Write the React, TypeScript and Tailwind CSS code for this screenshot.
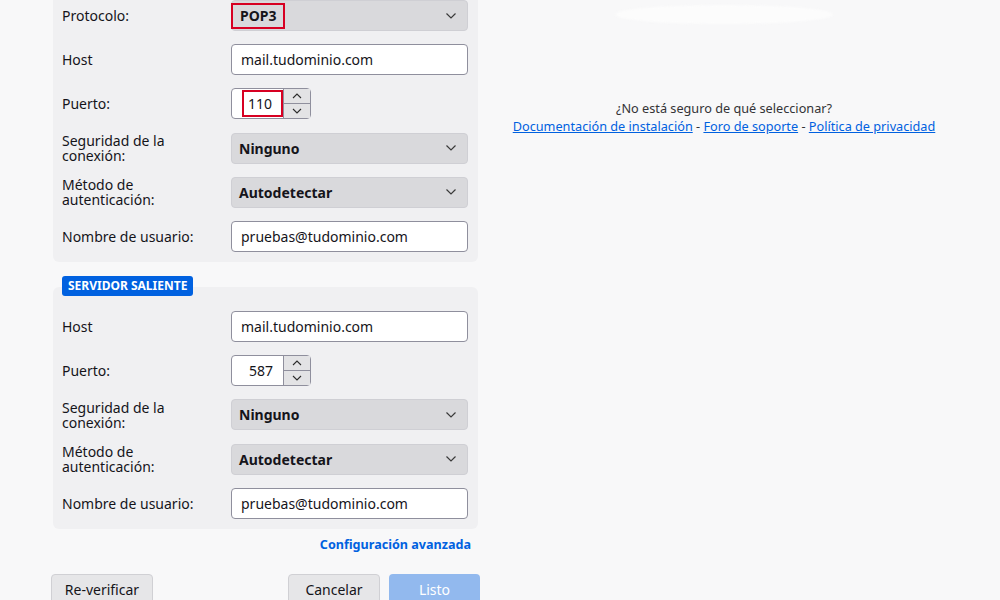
import React from "react";

const font = { fontFamily: '"Noto Sans", "Open Sans", sans-serif' };

function Chevron() {
  return (
    <svg width="12" height="8" viewBox="0 0 12 8" className="text-[#3a3a3a]">
      <path d="M1.5 1.5 L6 6 L10.5 1.5" fill="none" stroke="currentColor" strokeWidth="1.2" />
    </svg>
  );
}

function Row({ label, children }: { label: string; children: React.ReactNode }) {
  return (
    <div className="flex items-center h-[31px]">
      <div className="w-[169px] shrink-0 pr-[20px] text-[14px] leading-[15px] text-[#15141a]">{label}</div>
      <div className="flex-1">{children}</div>
    </div>
  );
}

function TextInput({ value }: { value: string }) {
  return (
    <div className="h-[31px] bg-white border border-[#8f8f9d] rounded-[4px] flex items-center px-[9px] text-[14px] text-[#15141a]">
      {value}
    </div>
  );
}

function Select({ value, marked }: { value: string; marked?: boolean }) {
  return (
    <div className="h-[31px] bg-[#d9d9dc] border border-[#cfcfd4] rounded-[4px] flex items-center justify-between pl-[7px] pr-[10px]">
      {marked ? (
        <span className="-ml-[8px] h-[26px] px-[7px] border-2 border-[#d70022] flex items-center text-[14px] font-bold text-[#15141a]">
          {value}
        </span>
      ) : (
        <span className="text-[14px] font-bold text-[#15141a]">{value}</span>
      )}
      <Chevron />
    </div>
  );
}

function Spinner({ value, marked }: { value: string; marked?: boolean }) {
  return (
    <div className="w-[80px] h-[31px] bg-white border border-[#8f8f9d] rounded-[4px] flex">
      <div className="flex-1 flex items-center justify-end py-[1px] pl-[10px]">
        {marked ? (
          <div className="w-full h-[27px] border-2 border-[#d70022] flex items-center px-[4px] text-[14px] text-[#15141a]">
            {value}
          </div>
        ) : (
          <span className="pr-[10px] text-[14px] text-[#15141a]">{value}</span>
        )}
      </div>
      <div className="w-[27px] flex flex-col border-l border-[#8f8f9d]">
        <div className="flex-1 bg-[#e3e3e5] border-b border-[#8f8f9d] flex items-center justify-center">
          <svg width="10" height="6" viewBox="0 0 10 6">
            <path d="M1 5 L5 1 L9 5" fill="none" stroke="#2b2b2b" strokeWidth="1.1" />
          </svg>
        </div>
        <div className="flex-1 bg-[#e3e3e5] flex items-center justify-center">
          <svg width="10" height="6" viewBox="0 0 10 6">
            <path d="M1 1 L5 5 L9 1" fill="none" stroke="#2b2b2b" strokeWidth="1.1" />
          </svg>
        </div>
      </div>
    </div>
  );
}

function ServerFields({ port, marked }: { port: string; marked?: boolean }) {
  return (
    <>
      <Row label="Host">
        <TextInput value="mail.tudominio.com" />
      </Row>
      <Row label="Puerto:">
        <Spinner value={port} marked={marked} />
      </Row>
      <Row label="Seguridad de la conexión:">
        <Select value="Ninguno" />
      </Row>
      <Row label="Método de autenticación:">
        <Select value="Autodetectar" />
      </Row>
      <Row label="Nombre de usuario:">
        <TextInput value="pruebas@tudominio.com" />
      </Row>
    </>
  );
}

export default function App() {
  return (
    <div className="w-[1000px] h-[600px] overflow-hidden bg-[#f8f8f9] flex" style={font}>
      <div className="ml-[51px] w-[429px] flex flex-col">
        <div className="mx-[2px] bg-[#f0f0f2] rounded-b-[6px] pl-[9px] pr-[10px] pb-[10px] flex flex-col gap-[13.2px]">
          <Row label="Protocolo:">
            <Select value="POP3" marked />
          </Row>
          <ServerFields port="110" marked />
        </div>

        <div className="mt-[14px] flex flex-col">
          <span className="relative z-10 self-start ml-[11px] h-[20px] px-[6px] rounded-[3px] bg-[#0061e0] text-white text-[12px] font-bold flex items-center">
            SERVIDOR SALIENTE
          </span>
          <div className="-mt-[9px] mx-[2px] bg-[#f0f0f2] rounded-[6px] pt-[24px] pl-[9px] pr-[10px] pb-[10px] flex flex-col gap-[13.25px]">
            <ServerFields port="587" />
          </div>
        </div>

        <div className="mt-[7px] pr-[9px] flex justify-end">
          <a className="text-[12.6px] font-bold text-[#0061e0]">Configuración avanzada</a>
        </div>

        <div className="mt-[19px] flex items-start">
          <button className="w-[102px] h-[32px] bg-[#e6e6e8] border border-[#d0d0d4] rounded-[4px] text-[14px] text-[#15141a]">
            Re-verificar
          </button>
          <div className="flex-1" />
          <button className="w-[92px] h-[32px] bg-[#e6e6e8] border border-[#d0d0d4] rounded-[4px] text-[14px] text-[#15141a]">
            Cancelar
          </button>
          <button className="ml-[9px] w-[91px] h-[32px] bg-[#92b9ee] rounded-[4px] text-[14px] text-white">
            Listo
          </button>
        </div>
      </div>

      <div className="ml-[20px] w-[448px] flex flex-col items-center">
        <div className="mt-[5px] w-[218px] h-[19px] rounded-[50%] bg-[#fcfcfc] blur-[1px]" />
        <p className="mt-[75px] text-[12.7px] leading-[18px] text-[#333336]">¿No está seguro de qué seleccionar?</p>
        <p className="text-[12.7px] leading-[18px] text-[#333336]">
          <a className="text-[#0061e0] underline">Documentación de instalación</a>
          {" - "}
          <a className="text-[#0061e0] underline">Foro de soporte</a>
          {" - "}
          <a className="text-[#0061e0] underline">Política de privacidad</a>
        </p>
      </div>
    </div>
  );
}
